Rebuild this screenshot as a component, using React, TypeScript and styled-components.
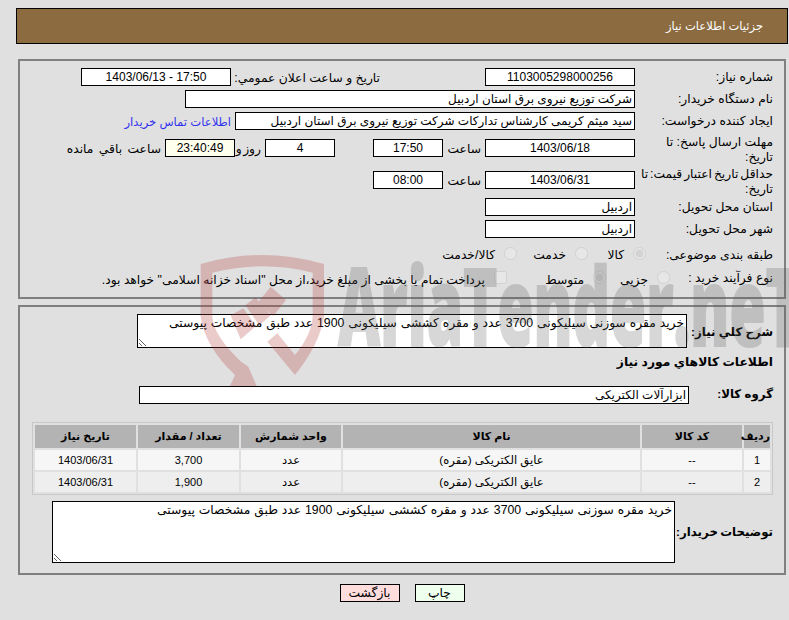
import React from 'react';
import styled, { createGlobalStyle } from 'styled-components';

const GlobalStyle = createGlobalStyle`
  html, body {
    margin: 0;
    padding: 0;
    background: #e0e0e0;
  }
  * {
    box-sizing: border-box;
  }
`;

const Page = styled.div`
  position: relative;
  width: 789px;
  height: 620px;
  overflow: hidden;
  padding-top: 8px;
  font-family: 'Liberation Sans', 'DejaVu Sans', sans-serif;
  font-size: 12.3px;
  color: #000;
`;

const TitleBar = styled.div`
  display: flex;
  align-items: center;
  width: 772px;
  height: 36px;
  margin-right: 1px;
  padding-right: 24px;
  background: #8b6b3f;
  border: 1px solid #000;
  font-size: 11.5px;
  color: #fff;
`;

const Panel = styled.div<{ $top: number; $bottom: number }>`
  width: 768px;
  margin-right: 3px;
  margin-top: ${(p) => p.$top}px;
  padding: 7px 11px ${(p) => p.$bottom}px 0;
  border: 2px solid #808080;
`;

const Row = styled.div<{ $height?: number; $top?: number }>`
  display: flex;
  align-items: flex-start;
  height: ${(p) => p.$height || 22}px;
  margin-top: ${(p) => p.$top || 0}px;
`;

const Label = styled.div<{ $width?: number; $drop?: number; $tight?: number }>`
  flex: none;
  width: ${(p) => p.$width || 138}px;
  line-height: 15px;
  padding-top: ${(p) => p.$drop ?? 2}px;
  word-spacing: ${(p) => p.$tight || 0}px;
  white-space: nowrap;
`;

const StrongLabel = styled(Label)`
  font-size: 11.8px;
  font-weight: bold;
`;

const Caption = styled.div<{ $width?: number; $gap?: number; $drop?: number; $spread?: number }>`
  flex: ${(p) => (p.$width ? 'none' : '0 1 auto')};
  width: ${(p) => (p.$width ? `${p.$width}px` : 'auto')};
  margin-top: ${(p) => p.$drop || 0}px;
  margin-right: ${(p) => p.$gap ?? 4}px;
  padding-top: 1px;
  line-height: 18px;
  word-spacing: ${(p) => p.$spread || 0}px;
  white-space: nowrap;
`;

const ContactLink = styled.a`
  margin-right: 4px;
  padding-top: 1px;
  font-size: 11.6px;
  line-height: 18px;
  color: #3333ee;
  text-decoration: none;
  cursor: pointer;
`;

const Field = styled.input<{ $width: number; $start?: boolean; $shift?: number; $tint?: boolean }>`
  flex: none;
  width: ${(p) => p.$width}px;
  height: 18px;
  margin: ${(p) => p.$shift || 0}px 0 0;
  padding: 0 2px;
  border: 1px solid #000;
  border-radius: 0;
  outline: none;
  background: ${(p) => (p.$tint ? '#ffffee' : '#fff')};
  font-family: inherit;
  font-size: 12px;
  color: #000;
  text-align: ${(p) => (p.$start ? 'right' : 'center')};
`;

const Spacer = styled.div<{ $width: number }>`
  flex: none;
  width: ${(p) => p.$width}px;
`;

const Option = styled.label<{ $width: number }>`
  display: flex;
  flex: none;
  align-items: flex-start;
  width: ${(p) => p.$width}px;
`;

const Radio = styled.input<{ $drop: number }>`
  flex: none;
  width: 13px;
  height: 13px;
  margin: ${(p) => p.$drop}px 0 0 9px;
  opacity: 0.55;
`;

const OptionText = styled.span<{ $drop: number }>`
  line-height: 15px;
  padding-top: ${(p) => p.$drop}px;
  white-space: nowrap;
`;

const Memo = styled.textarea<{ $width: number; $height: number }>`
  flex: none;
  display: block;
  width: ${(p) => p.$width}px;
  height: ${(p) => p.$height}px;
  padding: 1px 2px;
  border: 1px solid #000;
  border-radius: 0;
  outline: none;
  background: #fff;
  font: inherit;
  word-spacing: 0.5px;
  color: #000;
`;

const SectionTitle = styled.div`
  margin-top: 7px;
  line-height: 15px;
  font-weight: bold;
`;

const Items = styled.table`
  width: 741px;
  height: 73px;
  margin-top: 18px;
  table-layout: fixed;
  border: 1px solid #c8c8c8;
  border-spacing: 2px;
`;

const HeadCell = styled.th<{ $width?: number }>`
  width: ${(p) => (p.$width ? `${p.$width}px` : 'auto')};
  height: 23px;
  padding: 0;
  background: #b3b3b3;
  font-size: 11px;
  text-align: center;
`;

const Cell = styled.td<{ $alt?: boolean; $figure?: boolean }>`
  height: 20px;
  padding: 0;
  background: ${(p) => (p.$alt ? '#eeeeee' : '#f6f6f6')};
  font-size: ${(p) => (p.$figure ? 11 : 11.6)}px;
  text-align: center;
`;

const Actions = styled.div`
  display: flex;
  justify-content: center;
  gap: 15px;
  width: 772px;
  margin: 9px 1px 0 0;
`;

const ActionButton = styled.button<{ $width: number; $color: string }>`
  width: ${(p) => p.$width}px;
  height: 18px;
  padding: 0;
  border: 1px solid #000;
  border-radius: 0;
  background: ${(p) => p.$color};
  font: inherit;
  color: #000;
`;

const WatermarkText = styled.div`
  position: absolute;
  left: 338px;
  top: 240px;
  font-family: 'Open Sans', sans-serif;
  font-size: 108px;
  font-weight: 800;
  line-height: 130px;
  white-space: nowrap;
  color: #5a5a5a;
  -webkit-text-stroke: 2px #5a5a5a;
  opacity: 0.24;
  transform: scaleX(0.54);
  transform-origin: left top;
  pointer-events: none;
`;

const WatermarkLogo = styled.svg`
  position: absolute;
  left: 180px;
  top: 240px;
  width: 200px;
  height: 160px;
  opacity: 0.25;
  pointer-events: none;
`;

const summary = 'خرید مقره سوزنی سیلیکونی 3700 عدد و مقره کششی سیلیکونی 1900 عدد طبق مشخصات پیوستی';

const rows = [
  { id: '1', qty: '3,700' },
  { id: '2', qty: '1,900' },
];

const App: React.FC = () => (
  <>
    <GlobalStyle />
    <Page dir="rtl">
      <TitleBar>جزئیات اطلاعات نیاز</TitleBar>

      <Panel $top={15} $bottom={7}>
        <Row>
          <Label>شماره نیاز:</Label>
          <Field $width={150} readOnly value="1103005298000256" />
          <Caption $gap={105} $width={149}>تاریخ و ساعت اعلان عمومي:</Caption>
          <Field $width={150} readOnly value="17:50 - 1403/06/13" />
        </Row>
        <Row>
          <Label>نام دستگاه خریدار:</Label>
          <Field $width={450} $start readOnly value="شرکت توزیع نیروی برق استان اردبیل" />
        </Row>
        <Row>
          <Label>ایجاد کننده درخواست:</Label>
          <Field $width={400} $start readOnly value="سید میثم کریمی کارشناس تدارکات شرکت توزیع نیروی برق استان اردبیل" />
          <ContactLink>اطلاعات تماس خریدار</ContactLink>
        </Row>
        <Row $height={32}>
          <Label $drop={1}>مهلت ارسال پاسخ: تا<br />تاریخ:</Label>
          <Field $width={150} $shift={5} readOnly value="1403/06/18" />
          <Caption $width={38} $drop={5}>ساعت</Caption>
          <Field $width={70} $shift={5} readOnly value="17:50" />
          <Spacer $width={38} />
          <Field $width={70} $shift={5} readOnly value="4" />
          <Caption $width={26} $drop={5} $spread={-2}>روز و</Caption>
          <Field $width={70} $shift={5} $tint readOnly value="23:40:49" />
          <Caption $drop={5} $spread={2}>ساعت باقي مانده</Caption>
        </Row>
        <Row $height={32}>
          <Label $drop={1} $tight={-1.5}>حداقل تاریخ اعتبار قیمت: تا<br />تاریخ:</Label>
          <Field $width={150} $shift={5} readOnly value="1403/06/31" />
          <Caption $width={38} $drop={5}>ساعت</Caption>
          <Field $width={70} $shift={5} readOnly value="08:00" />
        </Row>
        <Row>
          <Label>استان محل تحویل:</Label>
          <Field $width={150} $start readOnly value="اردبیل" />
        </Row>
        <Row>
          <Label>شهر محل تحویل:</Label>
          <Field $width={150} $start readOnly value="اردبیل" />
        </Row>
        <Row $height={26}>
          <Label $width={127} $drop={6}>طبقه بندی موضوعی:</Label>
          <Option $width={58}><Radio $drop={5} type="radio" disabled defaultChecked name="kind" /><OptionText $drop={6}>کالا</OptionText></Option>
          <Option $width={71}><Radio $drop={5} type="radio" disabled name="kind" /><OptionText $drop={6}>خدمت</OptionText></Option>
          <Option $width={90}><Radio $drop={5} type="radio" disabled name="kind" /><OptionText $drop={6}>کالا/خدمت</OptionText></Option>
        </Row>
        <Row>
          <Label $width={103} $drop={3}>نوع فرآیند خرید :</Label>
          <Option $width={64}><Radio $drop={3} type="radio" disabled name="process" /><OptionText $drop={5}>جزیی</OptionText></Option>
          <Option $width={99}><Radio $drop={3} type="radio" disabled defaultChecked name="process" /><OptionText $drop={5}>متوسط</OptionText></Option>
          <Option $width={400}><Radio $drop={3} type="checkbox" disabled /><OptionText $drop={5}>پرداخت تمام یا بخشی از مبلغ خرید،از محل "اسناد خزانه اسلامی" خواهد بود.</OptionText></Option>
        </Row>
      </Panel>

      <Panel $top={6} $bottom={10}>
        <Row $height={34}>
          <StrongLabel $width={86} $drop={11}>شرح كلي نياز:</StrongLabel>
          <Memo $width={550} $height={34} readOnly value={summary} />
        </Row>
        <SectionTitle>اطلاعات كالاهاي مورد نياز</SectionTitle>
        <Row $height={18} $top={16}>
          <StrongLabel $width={84} $drop={1}>گروه کالا:</StrongLabel>
          <Field $width={550} $start readOnly value="ابزارآلات الکتریکی" />
        </Row>
        <Items>
          <thead>
            <tr>
              <HeadCell $width={26}>ردیف</HeadCell>
              <HeadCell $width={100}>کد کالا</HeadCell>
              <HeadCell>نام کالا</HeadCell>
              <HeadCell $width={100}>واحد شمارش</HeadCell>
              <HeadCell $width={101}>تعداد / مقدار</HeadCell>
              <HeadCell $width={101}>تاریخ نیاز</HeadCell>
            </tr>
          </thead>
          <tbody>
            {rows.map((row, index) => (
              <tr key={row.id}>
                <Cell $alt={index === 1} $figure>{row.id}</Cell>
                <Cell $alt={index === 1} $figure>--</Cell>
                <Cell $alt={index === 1}>عایق الکتریکی (مقره)</Cell>
                <Cell $alt={index === 1}>عدد</Cell>
                <Cell $alt={index === 1} $figure>{row.qty}</Cell>
                <Cell $alt={index === 1} $figure>1403/06/31</Cell>
              </tr>
            ))}
          </tbody>
        </Items>
        <Row $height={62} $top={6}>
          <StrongLabel $width={98} $drop={24} $tight={-1}>توضیحات خریدار:</StrongLabel>
          <Memo $width={623} $height={62} readOnly value={summary} />
        </Row>
      </Panel>

      <Actions>
        <ActionButton $width={50} $color="#eeffee">چاپ</ActionButton>
        <ActionButton $width={60} $color="#ffdddd">بازگشت</ActionButton>
      </Actions>

      <WatermarkText dir="ltr">AriaTender.neT</WatermarkText>
      <WatermarkLogo viewBox="0 0 600 480">
        <g fill="#b43232">
          <path d="M62 72 Q245 18 432 72 L432 230 Q420 310 345 405 L262 305 L292 280 L345 345 Q398 280 398 225 L398 98 Q245 60 97 98 L97 230 Q100 285 180 362 L205 380 L230 438 L150 438 L165 405 Q75 320 62 230 Z" />
          <path d="M232 190 L272 140 L318 180 L280 228 Z" />
          <path d="M152 226 L190 205 L228 258 L182 298 Z" />
          <path d="M196 196 L226 172 L272 226 L238 256 Z" />
        </g>
      </WatermarkLogo>
    </Page>
  </>
);

export default App;
